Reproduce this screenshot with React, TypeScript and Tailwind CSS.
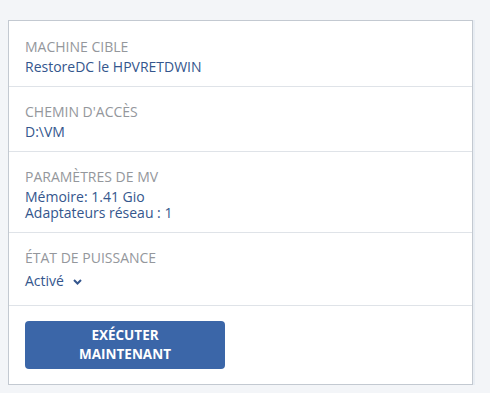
const font = { fontFamily: '"Open Sans", "Noto Sans", sans-serif' };

function Section({ label, children, first }: { label: string; children: React.ReactNode; first?: boolean }) {
  return (
    <div className={`px-4 ${first ? "pt-[18px]" : "pt-[17px]"} pb-[11px] border-b border-[#dfe3e8]`}>
      <div className="text-[14px] leading-4 text-[#94979c] mb-[4px]">{label}</div>
      <div className="text-[14px] leading-4 text-[#34568d]">{children}</div>
    </div>
  );
}

export default function App() {
  return (
    <div className="min-h-[393px] w-[490px] bg-[#f3f5f8] pt-5 pl-2" style={font}>
      <div className="w-[465px] bg-white border border-[#c3c9d1] shadow-[2px_0_0_#e8edf3]">
        <Section label="MACHINE CIBLE" first>RestoreDC le HPVRETDWIN</Section>
        <Section label="CHEMIN D'ACCÈS">D:\VM</Section>
        <Section label="PARAMÈTRES DE MV">
          <div className="leading-[15px]">Mémoire: 1.41 Gio</div>
          <div className="leading-[17px]">Adaptateurs réseau : 1</div>
        </Section>
        <div className="px-4 pt-[17px] pb-[14px] border-b border-[#dfe3e8]">
          <div className="text-[14px] leading-4 text-[#94979c] mb-[5px]">ÉTAT DE PUISSANCE</div>
          <div className="flex items-center gap-[9px] text-[14px] leading-5 text-[#34568d]">
            Activé
            <svg width="9" height="6" viewBox="0 0 9 6" fill="none" className="mt-[1px]">
              <path d="M1 1l3.5 3.5L8 1" stroke="#34568d" strokeWidth="2" />
            </svg>
          </div>
        </div>
        <div className="px-4 py-[15px]">
          <button className="w-[200px] h-[48px] rounded-[4px] bg-[#3b66a8] text-white text-[13.5px] font-bold leading-[19px] flex flex-col items-center justify-center">
            <span>EXÉCUTER</span>
            <span>MAINTENANT</span>
          </button>
        </div>
      </div>
    </div>
  );
}
